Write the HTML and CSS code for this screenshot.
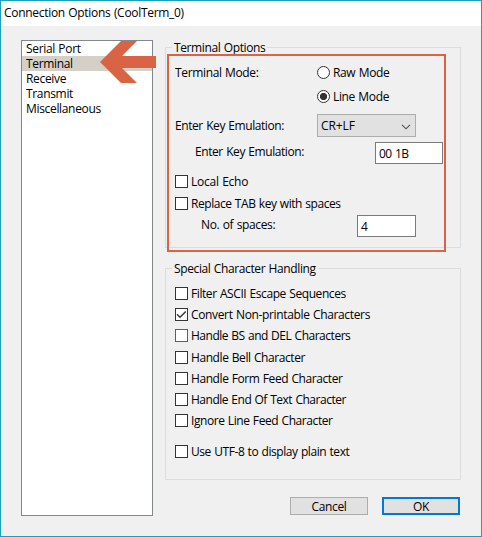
FILE: index.html
```html
<!DOCTYPE html>
<html lang="en">
<head>
<meta charset="utf-8">
<title>Connection Options</title>
<link rel="stylesheet" href="styles.css">
</head>
<body>
<div class="window">
  <header class="titlebar"><span>Connection Options (CoolTerm_0)</span></header>
  <main class="content">
    <ul class="pages">
      <li><span>Serial Port</span></li>
      <li class="selected"><span>Terminal</span></li>
      <li><span>Receive</span></li>
      <li><span>Transmit</span></li>
      <li><span>Miscellaneous</span></li>
    </ul>
    <div class="settings">
      <section class="group terminal">
        <h2><span>Terminal Options</span></h2>
        <div class="row mode"><span class="caption">Terminal Mode:</span>
          <div class="radios">
            <label class="radio"><i></i><span>Raw Mode</span></label>
            <label class="radio on"><i></i><span>Line Mode</span></label>
          </div>
        </div>
        <div class="row key"><span class="caption tight">Enter Key Emulation:</span>
          <div class="select"><span>CR+LF</span><svg width="10" height="6" viewBox="0 0 10 6"><path d="M1 .8 5 4.8 9 .8" fill="none" stroke="#505050" stroke-width="1.1"/></svg></div>
        </div>
        <div class="row custom"><span class="caption tight">Enter Key Emulation:</span><div class="field"><span>00 1B</span></div></div>
        <label class="check echo"><i></i><span>Local Echo</span></label>
        <label class="check tabs"><i></i><span>Replace TAB key with spaces</span></label>
        <div class="row spaces"><span class="caption">No. of spaces:</span><div class="field"><span>4</span></div></div>
      </section>
      <section class="group special">
        <h2><span>Special Character Handling</span></h2>
        <label class="check"><i></i><span class="tight">Filter ASCII Escape Sequences</span></label>
        <label class="check"><i><svg width="11" height="11" viewBox="0 0 11 11"><path d="M1 5.3 4 8.3 9.7 2.5" fill="none" stroke="#333" stroke-width="1.3"/></svg></i><span>Convert Non-printable Characters</span></label>
        <label class="check focus"><i></i><span class="tighter">Handle BS and DEL Characters</span></label>
        <label class="check"><i></i><span class="tight">Handle Bell Character</span></label>
        <label class="check"><i></i><span class="tight">Handle Form Feed Character</span></label>
        <label class="check"><i></i><span class="tighter">Handle End Of Text Character</span></label>
        <label class="check"><i></i><span class="tight">Ignore Line Feed Character</span></label>
        <label class="check utf"><i></i><span>Use UTF-8 to display plain text</span></label>
      </section>
      <footer class="actions">
        <button class="btn"><span>Cancel</span></button>
        <button class="btn primary"><span>OK</span></button>
      </footer>
    </div>
  </main>
  <div class="highlight"></div>
  <svg class="arrow" width="57" height="43" viewBox="0 0 57 43"><path d="M0 21 21 0H37L22 15H56V27H22L37 42H21Z" fill="#d96445"/></svg>
</div>
</body>
</html>
```
FILE: styles.css
```css
* { box-sizing: border-box; }
body { margin: 0; background: #f0f0f0; color: #000; font: 12px/15px "Open Sans", "Noto Sans", sans-serif; letter-spacing: -0.35px; word-spacing: 0.6px; }
span { white-space: nowrap; }
.tight { letter-spacing: -0.42px; }
.tighter { letter-spacing: -0.48px; }
.window { position: relative; width: 482px; height: 537px; border: 1px solid #1a9fbd; background: #f0f0f0; overflow: hidden; }
.titlebar { height: 25px; background: #fff; padding: 4px 0 0 3px; letter-spacing: -0.3px; }
.content { display: flex; gap: 12px; padding: 14px 20px 0; }
.pages { list-style: none; margin: 0; padding: 0; width: 132px; height: 476px; border: 1px solid #828790; background: #fff; letter-spacing: -0.33px; }
.pages li { height: 15px; padding-left: 4px; }
.pages span { display: block; height: 15px; }
.pages .selected { background: #d4d0c8; }
.settings { width: 296px; padding-top: 7px; }
.group { border: 1px solid #dcdcdc; padding-left: 9px; }
.terminal { height: 201px; }
.special { height: 212px; margin-top: 20px; }
.group h2 { display: flex; margin: -8px 0 0 -3px; height: 15px; font: inherit; letter-spacing: -0.38px; }
.group h2 span { background: #f0f0f0; padding: 0 2px; }
.row { display: flex; }
.caption { flex: none; }
.mode { margin-top: 9px; height: 50px; }
.mode .caption { width: 142px; padding-top: 1px; }
.radio { display: flex; height: 24px; gap: 3px; }
.radio i { width: 13px; height: 13px; margin-top: 2px; border: 1px solid #333; border-radius: 50%; background: #fff; }
.radio.on i { background: radial-gradient(circle, #333 3.2px, #fff 4px); }
.radio span { padding-top: 1px; }
.key { height: 28px; }
.key .caption { width: 142px; padding-top: 4px; }
.select { width: 99px; height: 23px; border: 1px solid #adadad; background: #e1e1e1; display: flex; justify-content: space-between; padding: 3px 4px 0 3px; letter-spacing: -0.1px; }
.select svg { margin-top: 6px; }
.field { border: 1px solid #7a7a7a; background: #fff; height: 22px; padding: 3px 0 0 3px; }
.custom { height: 33px; padding-left: 20px; }
.custom .caption { width: 180px; padding-top: 2px; }
.custom .field { width: 68px; letter-spacing: -0.5px; }
.check { display: flex; gap: 3px; height: 21px; }
.check i { flex: none; width: 13px; height: 13px; border: 1px solid #333; background: #fff; }
.check i svg { display: block; }
.check span { margin-top: -1px; }
.echo { height: 22px; letter-spacing: -0.25px; }
.tabs { height: 18px; letter-spacing: -0.44px; }
.spaces { padding-left: 26px; }
.spaces .caption { width: 156px; padding-top: 2px; }
.spaces .field { width: 59px; }
.special h2 { margin-bottom: 11px; }
.check.focus { height: 22px; }
.check.focus i { border-color: #0078d7; }
.utf { margin-top: 10px; letter-spacing: -0.43px; }
.actions { display: flex; justify-content: flex-end; gap: 14px; padding: 17px 1px 0 0; }
.btn { width: 78px; height: 18px; padding: 0; border: 1px solid #adadad; background: #e1e1e1; font: inherit; letter-spacing: inherit; line-height: 15px; color: #000; }
.primary { border: 2px solid #0078d7; }
.highlight { position: absolute; left: 166px; top: 53px; width: 279px; height: 198px; border: 2px solid #d96445; }
.arrow { position: absolute; left: 99px; top: 40px; }
```
